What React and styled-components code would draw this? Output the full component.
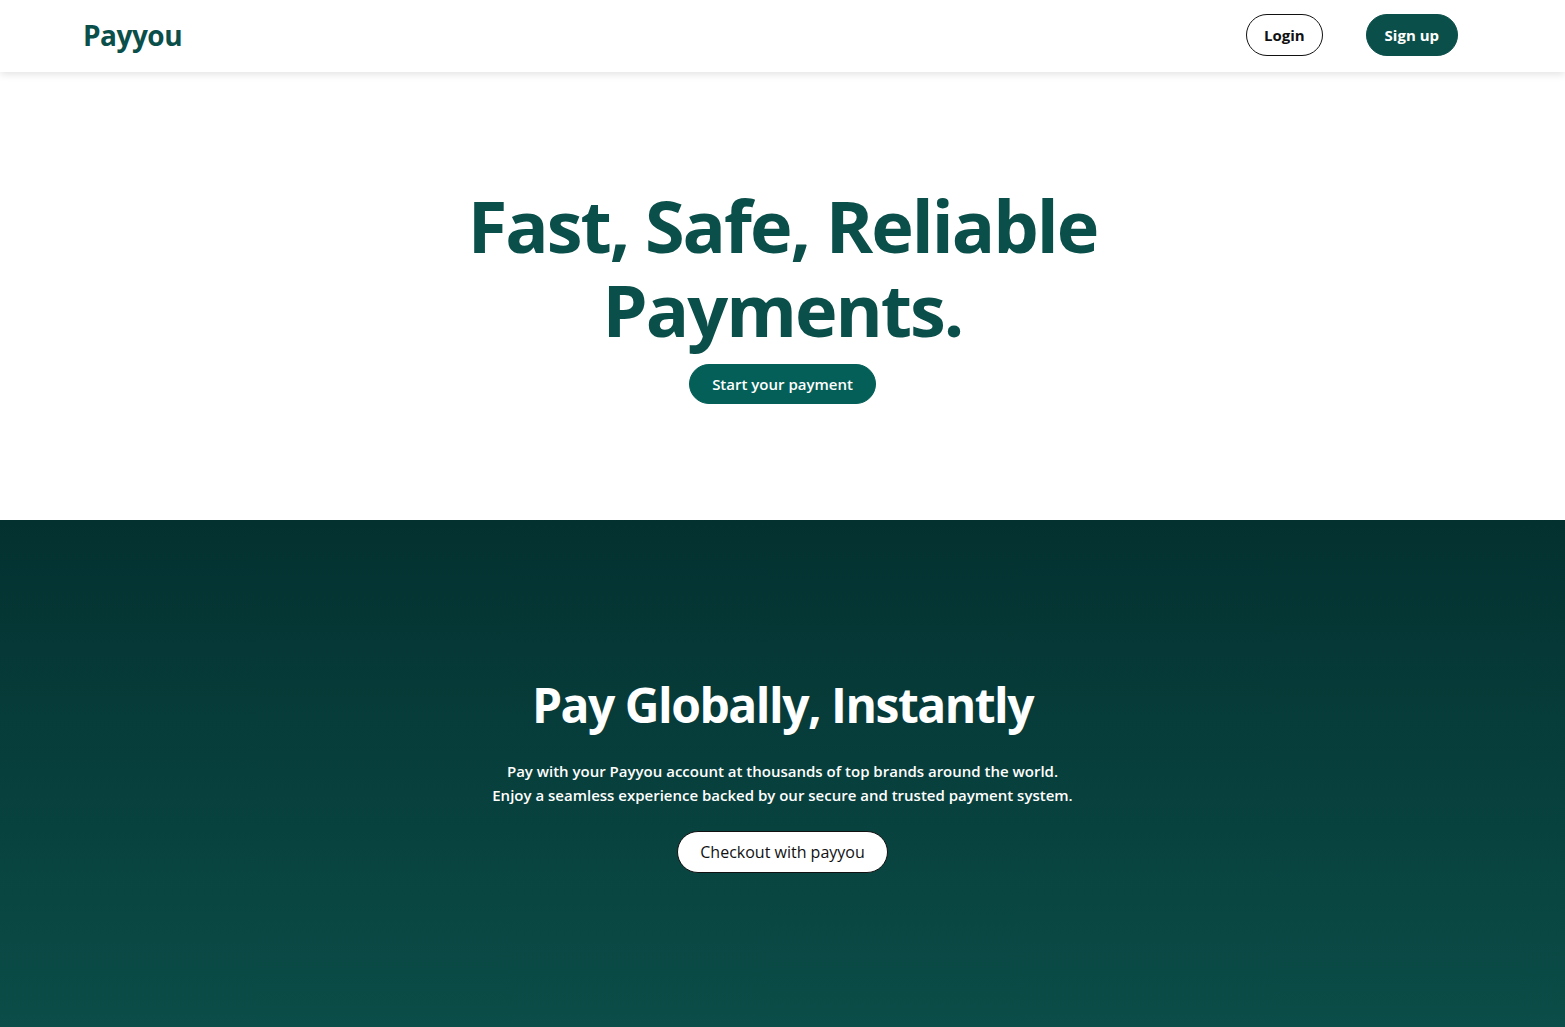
import React from "react";
import styled, { createGlobalStyle } from "styled-components";

const Global = createGlobalStyle`
  * { box-sizing: border-box; }
  html, body { margin: 0; padding: 0; }
  body {
    font-family: "Open Sans", "Noto Sans", "Liberation Sans", sans-serif;
    background: #ffffff;
  }
`;

const Nav = styled.header`
  height: 72px;
  display: flex;
  align-items: center;
  justify-content: space-between;
  padding: 0 107px 2px 83px;
  background: #fff;
  box-shadow: 0 2px 8px rgba(0, 0, 0, 0.12);
  position: relative;
  z-index: 1;
`;

const Logo = styled.div`
  font-size: 28px;
  font-weight: 700;
  color: #0b4f4a;
  letter-spacing: -0.5px;
`;

const NavActions = styled.div`
  display: flex;
  align-items: center;
  gap: 43px;
`;

const PillButton = styled.button`
  height: ${(p) => p.$h || 42}px;
  padding: 0 ${(p) => p.$px || 17}px;
  border-radius: 999px;
  font-family: inherit;
  font-size: ${(p) => p.$fs || 15}px;
  font-weight: ${(p) => p.$fw || 700};
  cursor: pointer;
  border: 1px solid ${(p) => (p.$variant === "solid" ? "#0b4f4a" : "#111")};
  background: ${(p) =>
    p.$variant === "solid" ? "#0b4f4a" : p.$variant === "accent" ? "#035f58" : "#fff"};
  color: ${(p) => (p.$variant === "outline" ? "#111" : "#fff")};
  ${(p) => p.$variant === "accent" && "border-color: #035f58;"}
`;

const Hero = styled.section`
  height: 448px;
  display: flex;
  flex-direction: column;
  align-items: center;
  padding-top: 111px;
`;

const HeroTitle = styled.h1`
  margin: 0 0 13px;
  font-size: 72px;
  line-height: 84px;
  font-weight: 700;
  color: #0b4f4a;
  text-align: center;
  letter-spacing: -2px;
`;

const Band = styled.section`
  min-height: 507px;
  background: linear-gradient(180deg, #033130 0%, #0b4d48 100%);
  display: flex;
  flex-direction: column;
  align-items: center;
  padding-top: 153px;
  color: #fff;
`;

const BandTitle = styled.h2`
  margin: 0;
  font-size: 48px;
  line-height: 64px;
  font-weight: 700;
  letter-spacing: -1.5px;
`;

const BandText = styled.p`
  margin: 22px 0 24px;
  font-size: 15px;
  line-height: 24px;
  font-weight: 600;
  text-align: center;
`;

export default function App() {
  return (
    <>
      <Global />
      <Nav>
        <Logo>Payyou</Logo>
        <NavActions>
          <PillButton $variant="outline">Login</PillButton>
          <PillButton $variant="solid" $px={18}>Sign up</PillButton>
        </NavActions>
      </Nav>
      <Hero>
        <HeroTitle>
          Fast, Safe, Reliable
          <br />
          Payments.
        </HeroTitle>
        <PillButton $variant="accent" $h={40} $px={22} $fw={600}>
          Start your payment
        </PillButton>
      </Hero>
      <Band>
        <BandTitle>Pay Globally, Instantly</BandTitle>
        <BandText>
          Pay with your Payyou account at thousands of top brands around the world.
          <br />
          Enjoy a seamless experience backed by our secure and trusted payment system.
        </BandText>
        <PillButton $variant="outline" $h={42} $px={22} $fw={400} $fs={16}>
          Checkout with payyou
        </PillButton>
      </Band>
    </>
  );
}
